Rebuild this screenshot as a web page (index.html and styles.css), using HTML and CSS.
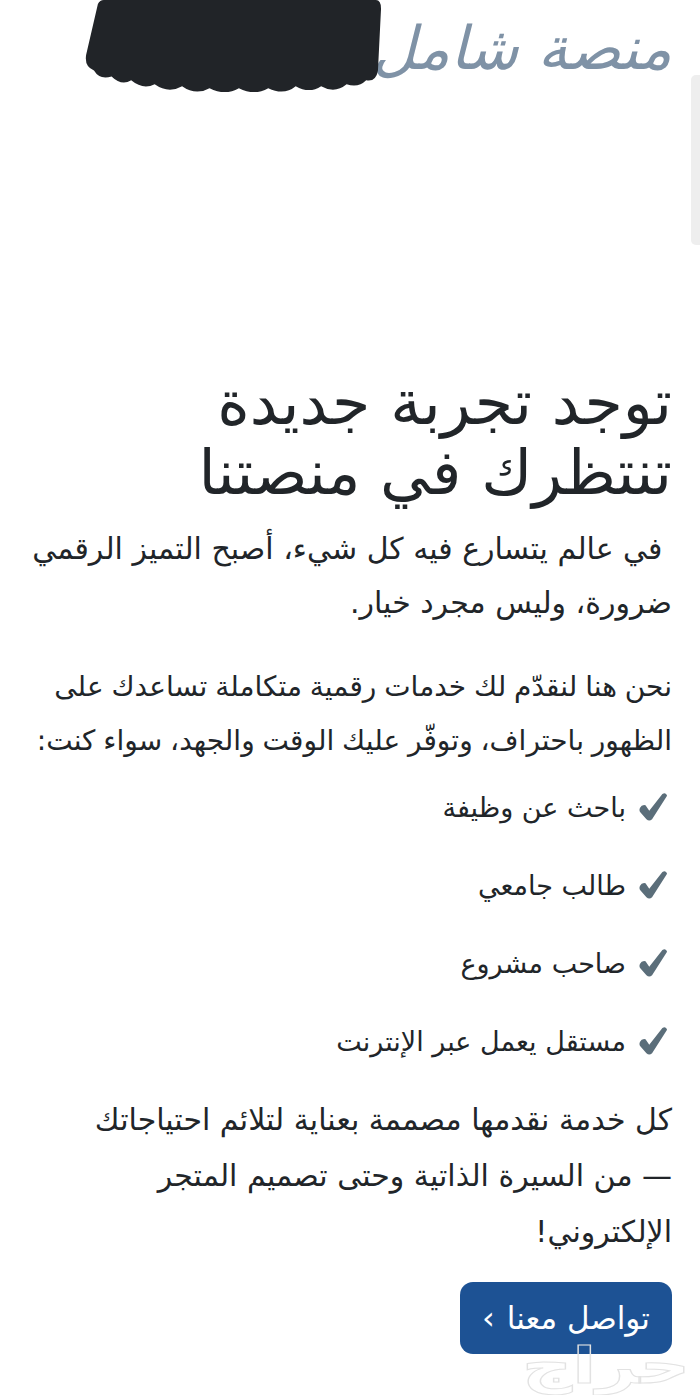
FILE: index.html
```html
<!DOCTYPE html>
<html lang="ar" dir="rtl">
<head>
<meta charset="utf-8">
<title>منصة شامل</title>
<link rel="stylesheet" href="styles.css">
</head>
<body>
<header class="site-header">
  <span class="brand">منصة شامل</span>
  <svg class="redact" viewBox="0 0 310 96" aria-hidden="true">
    <path d="M22 0 H300 Q306 0 305 12 L302 72 Q300 84 290 82 Q282 90 270 86 Q258 96 244 88 Q232 96 218 88 Q206 98 190 90 Q176 98 160 90 Q146 98 130 90 Q116 98 102 88 Q88 96 74 86 Q62 92 50 82 Q40 88 30 78 Q18 82 12 72 Q2 68 4 56 L16 4 Q18 0 22 0 Z" fill="#212428"/>
  </svg>
</header>
<div class="scrollbar"></div>
<main class="content">
  <h1 class="title">توجد تجربة جديدة تنتظرك في منصتنا</h1>
  <p class="lead">&nbsp;في عالم يتسارع فيه كل شيء، أصبح التميز الرقمي ضرورة، وليس مجرد خيار.</p>
  <p class="text intro">نحن هنا لنقدّم لك خدمات رقمية متكاملة تساعدك على الظهور باحتراف، وتوفّر عليك الوقت والجهد، سواء كنت:</p>
  <ul class="checks">
    <li><svg class="tick" viewBox="0 0 32 32"><path d="M2 17 Q4 13 8 14 L12 20 L26 2 Q30 0 31 4 L15 29 Q12 32 9 29 L2 21 Q1 19 2 17 Z" fill="#5b6e7a"/></svg><span>باحث عن وظيفة</span></li>
    <li><svg class="tick" viewBox="0 0 32 32"><path d="M2 17 Q4 13 8 14 L12 20 L26 2 Q30 0 31 4 L15 29 Q12 32 9 29 L2 21 Q1 19 2 17 Z" fill="#5b6e7a"/></svg><span>طالب جامعي</span></li>
    <li><svg class="tick" viewBox="0 0 32 32"><path d="M2 17 Q4 13 8 14 L12 20 L26 2 Q30 0 31 4 L15 29 Q12 32 9 29 L2 21 Q1 19 2 17 Z" fill="#5b6e7a"/></svg><span>صاحب مشروع</span></li>
    <li><svg class="tick" viewBox="0 0 32 32"><path d="M2 17 Q4 13 8 14 L12 20 L26 2 Q30 0 31 4 L15 29 Q12 32 9 29 L2 21 Q1 19 2 17 Z" fill="#5b6e7a"/></svg><span>مستقل يعمل عبر الإنترنت</span></li>
  </ul>
  <p class="text closing">كل خدمة نقدمها مصممة بعناية لتلائم احتياجاتك —&nbsp;من السيرة الذاتية وحتى تصميم المتجر الإلكتروني!</p>
  <div class="cta-row">
    <a class="cta" href="#">تواصل معنا <span class="chev">›</span></a>
  </div>
</main>
<div class="watermark">حراج</div>
</body>
</html>
```
FILE: styles.css
```css
html, body {
  margin: 0;
  padding: 0;
  background: #ffffff;
}
body {
  width: 700px;
  height: 1395px;
  overflow: hidden;
  position: relative;
  font-family: "DejaVu Sans", sans-serif;
  color: #212529;
}
.site-header {
  height: 96px;
  position: relative;
  display: flex;
  align-items: flex-start;
  padding-right: 28px;
}
.brand {
  font-family: "DejaVu Sans", sans-serif;
  font-size: 60px;
  color: #7f92a6;
  line-height: 1;
  margin-top: 18px;
  font-style: italic;
}
.redact {
  position: absolute;
  left: 80px;
  top: 0;
  width: 308px;
  height: 94px;
}
.scrollbar {
  position: absolute;
  left: 691px;
  top: 75px;
  width: 9px;
  height: 170px;
  background: #eeeeee;
  border-radius: 5px 0 0 5px;
}
.content {
  padding: 272px 28px 0 16px;
}
.title {
  font-size: 62px;
  font-weight: normal;
  line-height: 70px;
  max-width: 560px;
  margin: 0 0 14px;
  color: #212529;
}
.lead, .text {
  font-size: 30px;
  line-height: 54px;
  margin: 0;
}
.lead {
  margin-bottom: 30px;
}
.intro {
  font-size: 28px;
  word-spacing: -1px;
}
.checks {
  list-style: none;
  margin: 0 0 12px;
  padding: 0;
}
.checks li {
  display: flex;
  align-items: center;
  gap: 12px;
  font-size: 27px;
  height: 78px;
  padding-right: 4px;
}
.tick {
  width: 30px;
  height: 30px;
  flex: none;
}
.closing {
  line-height: 56px;
  margin-bottom: 22px;
}
.cta-row {
  display: flex;
}
.cta {
  display: inline-flex;
  align-items: center;
  gap: 12px;
  background: #1d5294;
  color: #ffffff;
  text-decoration: none;
  font-size: 31px;
  border-radius: 13px;
  padding: 0 22px;
  height: 72px;
}
.chev {
  font-size: 32px;
}
.watermark {
  position: absolute;
  right: 10px;
  bottom: 4px;
  font-size: 50px;
  line-height: 1;
  color: transparent;
  -webkit-text-stroke: 1px #e2e2e2;
  font-weight: bold;
  transform: scaleX(1.4);
  transform-origin: right bottom;
}
```
